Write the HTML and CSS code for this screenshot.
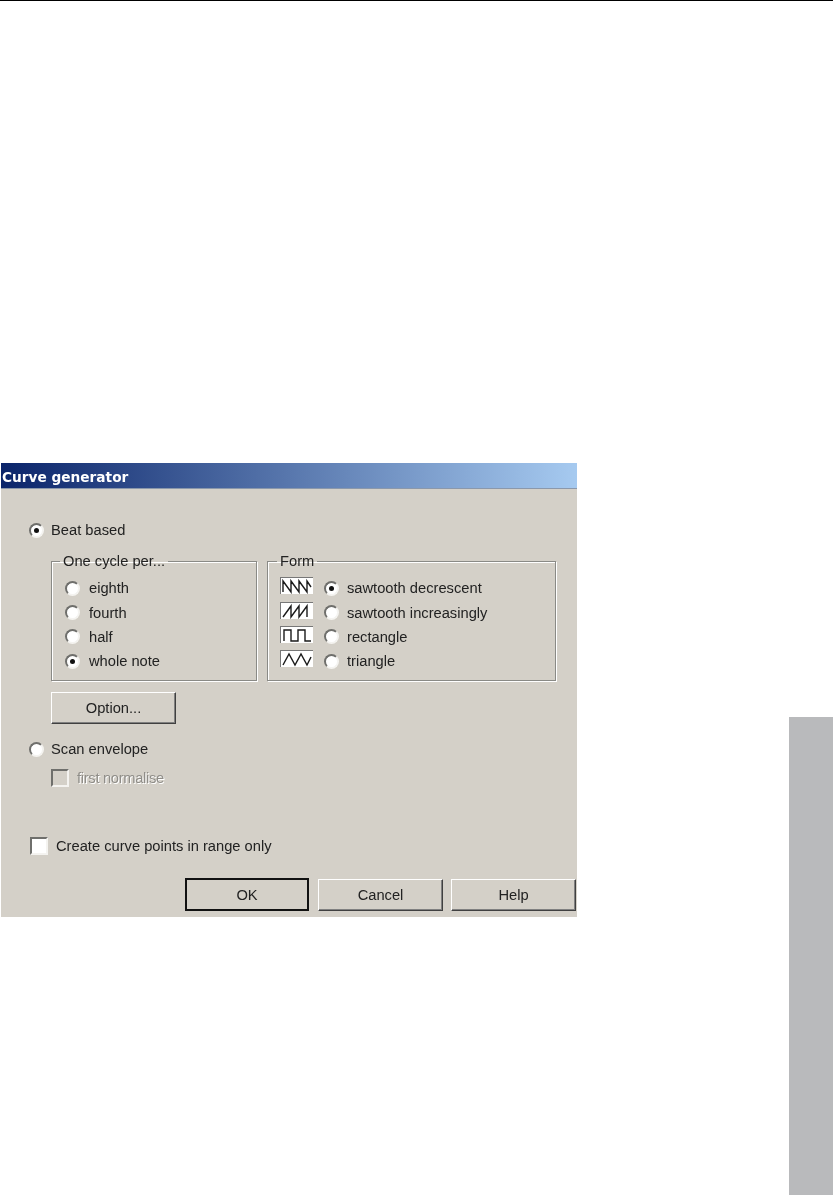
FILE: index.html
```html
<!DOCTYPE html>
<html lang="en">
<head>
<meta charset="utf-8">
<title>Curve generator</title>
<link rel="stylesheet" href="styles.css">
</head>
<body>
<div class="rule"></div>
<div class="page">
  <main class="dialog">
    <header class="titlebar">Curve generator</header>
    <div class="line beat"><span class="radio on"></span><span>Beat based</span></div>
    <div class="groups">
      <fieldset class="group cycle">
        <legend>One cycle per...</legend>
        <div class="rows">
          <div class="line"><span class="radio"></span><span>eighth</span></div>
          <div class="line"><span class="radio"></span><span>fourth</span></div>
          <div class="line"><span class="radio"></span><span>half</span></div>
          <div class="line"><span class="radio on"></span><span>whole note</span></div>
        </div>
      </fieldset>
      <fieldset class="group form">
        <legend>Form</legend>
        <div class="rows">
          <div class="line">
            <svg class="wave" viewBox="0 0 32 16"><path d="M2 14V3L10 14V3L18 14V3L26 14V3L30 9"/></svg>
            <span class="radio on"></span><span>sawtooth decrescent</span>
          </div>
          <div class="line">
            <svg class="wave" viewBox="0 0 32 16"><path d="M2 14L10 3V14L18 3V14L26 3V14"/></svg>
            <span class="radio"></span><span>sawtooth increasingly</span>
          </div>
          <div class="line">
            <svg class="wave" viewBox="0 0 32 16"><path d="M3 14V3H10V14H17V3H24V14H30"/></svg>
            <span class="radio"></span><span>rectangle</span>
          </div>
          <div class="line">
            <svg class="wave" viewBox="0 0 32 16"><path d="M2 14L8 3L14 14L20 3L26 14L30 6"/></svg>
            <span class="radio"></span><span>triangle</span>
          </div>
        </div>
      </fieldset>
    </div>
    <button class="btn option" type="button">Option...</button>
    <div class="line scan"><span class="radio"></span><span>Scan envelope</span></div>
    <div class="line normalise"><span class="check off"></span><span class="disabled">first normalise</span></div>
    <div class="line range"><span class="check"></span><span>Create curve points in range only</span></div>
    <div class="actions">
      <button class="btn default" type="button">OK</button>
      <button class="btn" type="button">Cancel</button>
      <button class="btn" type="button">Help</button>
    </div>
  </main>
  <aside class="tab"></aside>
</div>
</body>
</html>
```
FILE: styles.css
```css
html, body {
  margin: 0;
  padding: 0;
  background: #fff;
}
body {
  height: 1195px;
  overflow: hidden;
  font-family: "Liberation Sans", Arial, sans-serif;
  font-size: 14.7px;
  color: #222;
}
.rule {
  height: 1px;
  background: #000;
}
.page {
  display: flex;
  height: 1194px;
}
.dialog {
  width: 576px;
  height: 454px;
  margin: 462px 0 0 1px;
  background: #d4d0c8;
  filter: blur(0.5px);
  box-sizing: border-box;
}
.titlebar {
  height: 26px;
  line-height: 28px;
  padding-left: 1px;
  background: linear-gradient(90deg, #0a246a, #a6caf0);
  color: #fff;
  font-family: "DejaVu Sans", sans-serif;
  font-weight: bold;
  font-size: 13.7px;
  border-bottom: 1px solid #8b98ab;
  box-sizing: border-box;
}
.line {
  display: flex;
  align-items: center;
  white-space: nowrap;
}
.radio {
  flex: none;
  width: 15px;
  height: 15px;
  box-sizing: border-box;
  border-radius: 50%;
  background: #fff;
  border: 2px solid;
  border-color: #6f6f6c #f4f3f0 #f4f3f0 #6f6f6c;
  display: flex;
  align-items: center;
  justify-content: center;
}
.radio.on::after {
  content: "";
  width: 5px;
  height: 5px;
  border-radius: 50%;
  background: #111;
}
.beat, .scan {
  height: 20px;
  padding-left: 28px;
  gap: 7px;
}
.beat { margin-top: 31px; }
.groups {
  display: flex;
  gap: 10px;
  margin: 13px 0 0 50px;
}
.group {
  margin: 0;
  min-width: 0;
  box-sizing: border-box;
  height: 128px;
  padding: 7px 0 0 12px;
  border: 1px solid #8a8a86;
  box-shadow: 1px 1px 0 #fff, inset 1px 1px 0 #fff;
}
.group legend {
  padding: 0 3px;
  margin-left: -3px;
  line-height: 16px;
  height: 16px;
}
.cycle { width: 206px; padding-left: 13px; }
.cycle legend { margin-left: -5px; }
.form { width: 289px; }
.rows {
  display: grid;
  grid-auto-rows: 24.4px;
}
.cycle .line { gap: 9px; }
.wave {
  flex: none;
  width: 33px;
  height: 17px;
  margin: -5px 11px 0 0;
  background: #fff;
  border-top: 1px solid #777;
  border-left: 1px solid #777;
  box-sizing: border-box;
  fill: none;
  stroke: #1a1a1a;
  stroke-width: 1.4;
}
.form .radio { margin-right: 8px; }
.btn {
  display: block;
  box-sizing: border-box;
  flex: none;
  height: 32px;
  padding: 0;
  font: inherit;
  color: inherit;
  background: #d4d0c8;
  border: 1px solid;
  border-color: #fff #404040 #404040 #fff;
  box-shadow: inset -1px -1px 0 #808080;
}
.option {
  width: 125px;
  margin: 11px 0 0 50px;
}
.scan { margin-top: 15px; }
.normalise {
  height: 19px;
  margin-top: 9px;
  padding-left: 50px;
  gap: 8px;
}
.check {
  flex: none;
  width: 18px;
  height: 18px;
  box-sizing: border-box;
  background: #fff;
  border: 2px solid;
  border-color: #6f6f6c #f4f3f0 #f4f3f0 #6f6f6c;
}
.check.off { background: #d4d0c8; }
.disabled {
  color: #8f8d88;
  letter-spacing: -0.3px;
  text-shadow: 1px 1px 0 #fff;
}
.range {
  height: 18px;
  margin-top: 50px;
  padding-left: 29px;
  gap: 8px;
}
.actions {
  display: flex;
  gap: 8px;
  margin: 24px 0 0 184px;
}
.actions .btn { width: 125px; }
.actions .default {
  width: 124px;
  height: 33px;
  margin: -1px 1px 0 0;
  border: 2px solid #111;
  box-shadow: none;
}
.tab {
  width: 44px;
  height: 478px;
  margin-left: auto;
  align-self: flex-end;
  background: #b9babc;
}
```
